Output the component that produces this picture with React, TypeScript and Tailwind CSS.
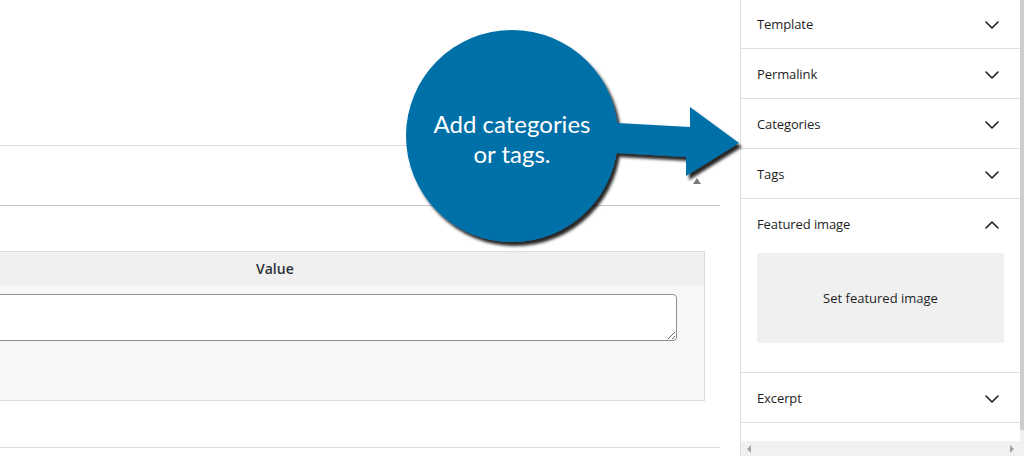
import { ChevronDown, ChevronUp } from "lucide-react";

const font = { fontFamily: '"Open Sans", "Noto Sans", sans-serif' };

function PanelRow({ title, first }: { title: string; first?: boolean }) {
  return (
    <div
      className={`flex items-center justify-between px-4 pt-[2px] border-b border-[#e0e0e0] ${
        first ? "h-[49px]" : "h-[50px]"
      }`}
    >
      <span className="text-[13px] font-medium text-[#1e1e1e] tracking-[-0.1px]">{title}</span>
      <ChevronDown size={24} strokeWidth={1.6} className="text-[#1e1e1e]" />
    </div>
  );
}

function Callout() {
  return (
    <div className="absolute left-[390px] top-[15px] w-[370px] h-[250px] pointer-events-none">
      <svg width="370" height="250" viewBox="390 15 370 250" className="absolute inset-0">
        <defs>
          <filter id="shade" x="-20%" y="-20%" width="140%" height="140%">
            <feDropShadow dx="3" dy="4" stdDeviation="1.6" floodColor="#000" floodOpacity="0.85" />
          </filter>
        </defs>
        <g filter="url(#shade)" fill="#0071a8">
          <circle cx="512" cy="136" r="106" />
          <polygon points="600,122 690,127 690,107 739,143 686,176 686,157 600,152" />
        </g>
      </svg>
      <div
        className="absolute left-0 top-[94px] w-[244px] text-center text-white text-[24px] leading-[30px]"
        style={{ fontFamily: 'Lato, "Open Sans", sans-serif' }}
      >
        Add categories
        <br />
        or tags.
      </div>
    </div>
  );
}

export default function App() {
  return (
    <div className="relative w-[1024px] h-[456px] overflow-hidden bg-white flex" style={font}>
      {/* editor area */}
      <div className="w-[740px] shrink-0 flex flex-col">
        <div className="h-[145px]" />
        <div className="w-[720px] h-[61px] border-t border-b border-t-[#dcdcde] border-b-[#c3c4c7] flex items-center justify-end pr-[19px]">
          <div className="w-0 h-0 border-l-[4px] border-r-[4px] border-b-[6px] border-l-transparent border-r-transparent border-b-[#787c82] mb-[-10px]" />
        </div>
        <div className="h-[45px]" />
        <div className="w-[705px] h-[150px] border border-l-0 border-[#dcdcde] bg-[#f6f7f7] flex flex-col">
          <div className="h-[33px] bg-[#f0f0f0] flex items-center pl-[256px]">
            <span className="text-[14px] font-semibold text-[#2c3338]">Value</span>
          </div>
          <div className="pt-[9px] pr-[27px]">
            <textarea
              className="block ml-[-10px] w-[687px] h-[47px] bg-white border border-[#8c8f94] rounded-[4px] outline-none"
              readOnly
            />
          </div>
        </div>
        <div className="h-[46px]" />
        <div className="w-[720px] border-t border-[#dcdcde]" />
      </div>

      {/* sidebar */}
      <div className="w-[280px] shrink-0 border-l border-[#e0e0e0] flex flex-col h-[456px]">
        <div className="flex-1 overflow-hidden">
          <PanelRow title="Template" first />
          <PanelRow title="Permalink" />
          <PanelRow title="Categories" />
          <PanelRow title="Tags" />
          <div className="border-b border-[#e0e0e0]">
            <div className="h-[49px] flex items-center justify-between px-4 pt-[2px]">
              <span className="text-[13px] font-medium text-[#1e1e1e] tracking-[-0.1px]">Featured image</span>
              <ChevronUp size={24} strokeWidth={1.6} className="text-[#1e1e1e]" />
            </div>
            <div className="px-4 pt-[5px] pb-[29px]">
              <div className="h-[90px] pt-[2px] bg-[#f0f0f0] rounded-[2px] flex items-center justify-center">
                <span className="text-[13px] text-[#1e1e1e]">Set featured image</span>
              </div>
            </div>
          </div>
          <PanelRow title="Excerpt" />
        </div>
        <div className="h-[15px] bg-[#f1f1f1] flex items-center justify-between px-[6px]">
          <div className="w-0 h-0 border-t-[4px] border-b-[4px] border-r-[4px] border-t-transparent border-b-transparent border-r-[#a3a3a3]" />
          <div className="w-0 h-0 border-t-[4px] border-b-[4px] border-l-[4px] border-t-transparent border-b-transparent border-l-[#a3a3a3]" />
        </div>
      </div>

      {/* vertical scrollbar */}
      <div className="w-[4px] shrink-0 bg-[#f1f1f1] flex flex-col">
        <div className="h-[430px] bg-[#cdcdcd]" />
      </div>

      <Callout />
    </div>
  );
}
